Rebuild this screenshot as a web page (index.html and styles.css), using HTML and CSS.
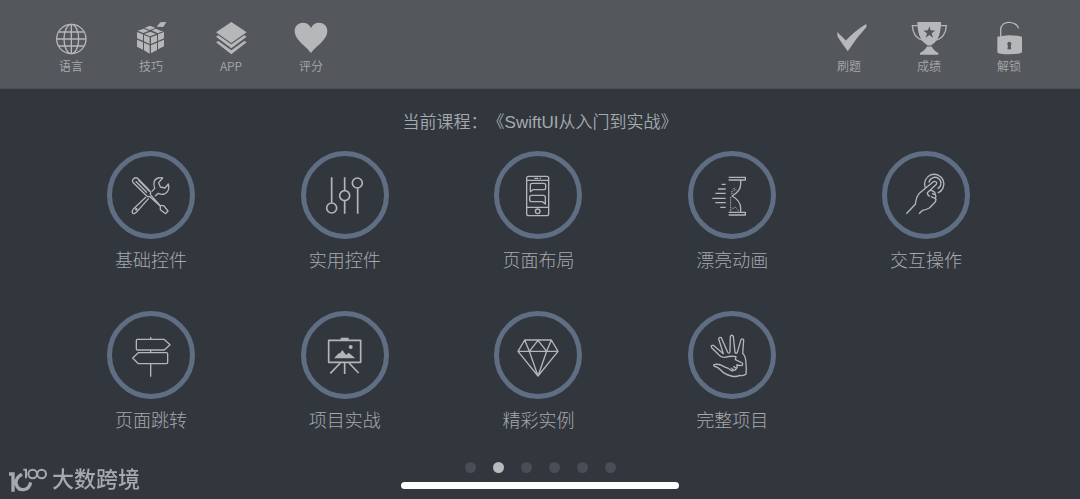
FILE: index.html
```html
<!DOCTYPE html>
<html lang="zh-CN">
<head>
    <meta charset="UTF-8">
    <meta name="viewport" content="width=device-width, initial-scale=1.0">
    <title>SwiftUI从入门到实战</title>
    <link rel="stylesheet" href="styles.css">
</head>
<body>
    <header class="toolbar">
        <nav class="toolbar-group">
            <a href="#language" class="tool">
                <svg viewBox="39 30 108 108" class="line">
                    <circle cx="94" cy="87" r="44"></circle>
                    <ellipse cx="94" cy="87" rx="22" ry="44"></ellipse>
                    <path d="M94 43V131M50 87H138M57 66H131M57 108H131"></path>
                </svg>
                <span>语言</span>
            </a>
            <a href="#tips" class="tool">
                <svg viewBox="279 30 108 108">
                    <path d="M291 66l18 7v19l-18-7zM312 75l17 7v20l-17-8zM291 89l18 8v22l-18-9zM312 98l17 8v25l-17-10z"></path>
                    <path d="M333 82l18-7v19l-18 8zM354 73l18-7v19l-18 8zM333 106l18-8v22l-18 10zM354 97l18-8v20l-18 9z"></path>
                    <path d="M293 62l17-6 17 6-17 7zM313 54l17-7 17 7-17 6zM313 72l18-7 17 7-18 7zM335 61l14-5 12 6 10 1-18 7zM350 50l11-13 18-1-9 15z"></path>
                </svg>
                <span>技巧</span>
            </a>
            <a href="#app" class="tool">
                <svg viewBox="516 30 108 108">
                    <path d="M571 36L617 67L571 99L525 67z"></path>
                    <path d="M525 80l7-4 39 27 39-27 7 4-46 35zM525 97l7-4 39 28 39-28 7 4-46 36z"></path>
                </svg>
                <span>APP</span>
            </a>
            <a href="#rate" class="tool">
                <svg viewBox="757 30 108 108">
                    <path d="M811 130C803 113 762 92 762 63C762 34 801 29 811 54C821 29 860 34 860 63C860 92 819 113 811 130z"></path>
                </svg>
                <span>评分</span>
            </a>
        </nav>
        <nav class="toolbar-group">
            <a href="#practice" class="tool">
                <svg viewBox="36 30 116 108">
                    <path d="M56 65L84 92Q112 62 149 39L151 48Q118 83 90 127Q72 102 57 79z"></path>
                </svg>
                <span>刷题</span>
            </a>
            <a href="#scores" class="tool">
                <svg viewBox="273 30 108 108">
                    <path fill-rule="evenodd" d="M292 36H363Q363 89 334 105Q336 119 355 129V134H300V129Q319 119 322 105Q292 89 292 36zM328 49l-4 12-14 1 11 8-4 13 11-8 11 8-4-13 11-8-14-1z"></path>
                    <path class="handle" d="M293 47H277Q279 83 309 91M362 47H379Q377 83 347 91"></path>
                    <path class="gap" d="M319 108H337"></path>
                </svg>
                <span>成绩</span>
            </a>
            <a href="#unlock" class="tool">
                <svg viewBox="513 30 108 108">
                    <path fill-rule="evenodd" d="M532 80Q568 71 606 80V127Q602 133 568 133Q534 133 532 127zM568 95a7 7 0 0 0-4 12l-2 11h12l-2-11a7 7 0 0 0-4-12z"></path>
                    <path class="handle" d="M542 80V61C542 28 589 32 596 55"></path>
                </svg>
                <span>解锁</span>
            </a>
        </nav>
    </header>

    <main class="content">
        <h1 class="course">当前课程：《SwiftUI从入门到实战》</h1>

        <div class="lessons">
            <a href="#basic" class="lesson">
                <span class="ring">
                    <svg viewBox="36 33 234 234">
                        <path d="M101 101Q107 95 115 102L147 135Q154 141 151 149L181 182L191 182L204 198L197 206L181 194V184L150 155Q142 156 138 151L100 113Q94 107 101 101zM107 109L141 143M115 105L148 139"></path>
                        <path d="M155 140L164 130Q156 105 174 99Q182 97 188 99L176 113L181 126L195 129L205 117Q211 139 193 147Q184 150 175 145L165 154M146 160L109 202Q101 209 97 203Q95 198 101 191L138 156"></path>
                        <circle cx="109" cy="193" r="2"></circle>
                    </svg>
                </span>
                <span>基础控件</span>
            </a>
            <a href="#controls" class="lesson">
                <span class="ring">
                    <svg viewBox="36 33 234 234" class="thick">
                        <path d="M113 97V173M152 97V137M152 167V206M191 130V206"></path>
                        <circle cx="113" cy="189" r="15"></circle>
                        <circle cx="152" cy="152" r="15"></circle>
                        <circle cx="190" cy="114" r="15"></circle>
                    </svg>
                </span>
                <span>实用控件</span>
            </a>
            <a href="#layout" class="lesson">
                <span class="ring">
                    <svg viewBox="36 33 234 234">
                        <rect x="119" y="94" width="66" height="118" rx="6"></rect>
                        <path d="M119 106H185M119 187H185M142 100H154M158 100H162"></path>
                        <path d="M130 140V120Q130 115 136 115H170Q176 115 176 121V128Q176 134 170 134H138zM175 177V157Q175 151 169 151H134Q128 151 128 157V164Q128 170 134 170H166z"></path>
                        <circle cx="152" cy="199" r="7"></circle>
                    </svg>
                </span>
                <span>页面布局</span>
            </a>
            <a href="#animation" class="lesson">
                <span class="ring">
                    <svg viewBox="36 33 234 234">
                        <path d="M143 97H193V105H143M143 202H193V210H143M179 106V118C179 136 166 146 153 153C166 160 179 171 179 190V201"></path>
                        <path d="M122 118H134M111 132H134M103 145H134M94 160H134M103 173H134M118 187H134"></path>
                        <path class="dotted" d="M149 156V199M152 193L163 186L174 199M150 141L166 133M155 132L162 129M150 147L157 144"></path>
                    </svg>
                </span>
                <span>漂亮动画</span>
            </a>
            <a href="#gesture" class="lesson">
                <span class="ring">
                    <svg viewBox="36 33 234 234">
                        <path d="M94 206L121 178Q124 153 134 144L175 110Q182 107 185 113Q186 117 181 121L157 143Q157 151 165 154M166 136Q181 138 181 149Q185 153 181 159Q185 164 180 172L163 189Q153 194 143 196L132 206M171 145L181 150M168 155L180 160"></path>
                        <path d="M151 128A29 29 0 1 1 188 144M162 113A18 18 0 1 1 188 131"></path>
                    </svg>
                </span>
                <span>交互操作</span>
            </a>
            <a href="#navigation" class="lesson">
                <span class="ring">
                    <svg viewBox="36 33 234 234">
                        <path d="M112 103H192L210 119L193 135H112Q109 135 109 131V107Q109 103 112 103zM115 143H199Q203 143 203 147V172Q203 176 199 176H115L98 159zM152 96V103M152 135V143M152 176V215"></path>
                    </svg>
                </span>
                <span>页面跳转</span>
            </a>
            <a href="#project" class="lesson">
                <span class="ring">
                    <svg viewBox="36 33 234 234" class="thick">
                        <rect x="104" y="106" width="96" height="66"></rect>
                        <path d="M139 174L109 205M152 174V207M165 174L194 204"></path>
                        <path class="solid" d="M140 98H164V106H140zM120 160L134 145H138L145 135L156 150L164 143L184 160z"></path>
                        <circle class="solid" cx="170" cy="126" r="6"></circle>
                    </svg>
                </span>
                <span>项目实战</span>
            </a>
            <a href="#examples" class="lesson">
                <span class="ring">
                    <svg viewBox="36 33 234 234">
                        <path d="M113 105H193L213 139L153 213L93 139zM93 139H213M113 105L127 139L153 106L179 139L193 105M127 139L153 213L179 139"></path>
                    </svg>
                </span>
                <span>精彩实例</span>
            </a>
            <a href="#complete" class="lesson">
                <span class="ring">
                    <svg viewBox="36 33 234 234">
                        <path d="M132 157Q121 159 112 148L92 128Q88 120 97 121L127 146L113 102Q114 95 121 98L140 142Q144 147 147 141L148 95Q152 87 157 94L162 142Q165 148 169 142L180 104Q185 99 188 105L185 145Q195 154 195 178Q197 192 195 207Q188 214 177 211Q164 217 151 213Q130 208 119 195Q112 187 99 183Q96 178 102 178Q113 177 122 181Q132 187 142 190"></path>
                        <path d="M132 157Q150 152 165 155L163 164L184 174Q187 180 181 182L167 180Q171 187 166 190L157 184M166 190Q164 197 158 195L150 189M158 195Q153 201 142 190"></path>
                    </svg>
                </span>
                <span>完整项目</span>
            </a>
        </div>

        <div class="pager">
            <button type="button" class="dot" aria-label="第1页"></button>
            <button type="button" class="dot active" aria-label="第2页"></button>
            <button type="button" class="dot" aria-label="第3页"></button>
            <button type="button" class="dot" aria-label="第4页"></button>
            <button type="button" class="dot" aria-label="第5页"></button>
            <button type="button" class="dot" aria-label="第6页"></button>
        </div>
        <div class="home-bar"></div>
    </main>

    <div class="watermark">
        <svg viewBox="24 27 120 84">
            <path class="heavy" d="M27 51H39V104M66 52Q47 62 48 79Q52 99 71 98Q88 96 92 76"></path>
            <path d="M70 38H78V64"></path>
            <circle cx="98" cy="51" r="13"></circle>
            <circle cx="125" cy="51" r="13"></circle>
        </svg>
        <span>大数跨境</span>
    </div>
</body>
</html>
```
FILE: styles.css
```css
:root {
    --background-color: #32373e;
    --toolbar-color: #54575b;
    --icon-color: #b5b7b8;
    --line-color: #b3b6b9;
    --text-color: #a6a9ad;
    --ring-color: #606e84;
}

* {
    margin: 0;
    padding: 0;
    box-sizing: border-box;
}

body {
    font-family: "Liberation Sans", "Noto Sans CJK SC", sans-serif;
    font-weight: 300;
    background-color: var(--background-color);
    color: var(--text-color);
    min-height: 100vh;
    display: flex;
    flex-direction: column;
}

a {
    color: inherit;
    text-decoration: none;
}

svg {
    display: block;
}

/* Top toolbar */
.toolbar {
    display: flex;
    justify-content: space-between;
    padding: 20px 31px 12px;
    background-color: var(--toolbar-color);
    border-bottom: 1px solid #4a4f55;
}

.toolbar-group {
    display: flex;
}

.tool {
    width: 80px;
    display: flex;
    flex-direction: column;
    align-items: center;
    font-family: "Noto Sans CJK SC", sans-serif;
    font-size: 12px;
    font-weight: 350;
    line-height: 20px;
}

.tool svg {
    width: 36px;
    height: 36px;
    fill: var(--icon-color);
}

.tool .line,
.tool .handle {
    fill: none;
    stroke: var(--icon-color);
    stroke-width: 4;
}

.tool .gap {
    stroke: var(--toolbar-color);
    stroke-width: 3;
}

/* Lesson grid */
.content {
    flex: 1;
    display: flex;
    flex-direction: column;
    align-items: center;
    padding-top: 21px;
}

.course {
    font-size: 17px;
    font-weight: 350;
    line-height: 26px;
    text-spacing-trim: space-all;
}

.lessons {
    align-self: stretch;
    display: grid;
    grid-template-columns: repeat(5, 1fr);
    row-gap: 36px;
    padding: 15px 57px 0 54px;
}

.lesson {
    display: flex;
    flex-direction: column;
    align-items: center;
    gap: 8px;
    font-size: 18px;
    line-height: 28px;
}

.ring {
    width: 88px;
    height: 88px;
    border: 5px solid var(--ring-color);
    border-radius: 50%;
}

.ring svg {
    width: 78px;
    height: 78px;
    fill: none;
    stroke: var(--line-color);
    stroke-width: 4;
    stroke-linejoin: round;
}

.ring .thick {
    stroke-width: 5;
}

.ring .solid {
    fill: var(--line-color);
    stroke: none;
}

.ring .dotted {
    stroke-width: 3;
    stroke-dasharray: 3 2;
}

/* Page dots and home indicator */
.pager {
    display: flex;
    gap: 17px;
    padding-top: 27px;
}

.dot {
    width: 11px;
    height: 11px;
    border: none;
    border-radius: 50%;
    background-color: #484d57;
    cursor: pointer;
}

.dot.active {
    background-color: #b8babc;
}

.home-bar {
    width: 278px;
    height: 7px;
    margin-top: 9px;
    border-radius: 4px;
    background-color: #fcffff;
}

.watermark {
    position: fixed;
    left: 8px;
    bottom: 5px;
    display: flex;
    align-items: center;
    gap: 4px;
    color: #a6a9ad;
    font-size: 22px;
    font-weight: 500;
    line-height: 28px;
}

.watermark svg {
    width: 40px;
    height: 28px;
    fill: none;
    stroke: currentColor;
    stroke-width: 6;
}

.watermark .heavy {
    stroke-width: 10;
}
```
